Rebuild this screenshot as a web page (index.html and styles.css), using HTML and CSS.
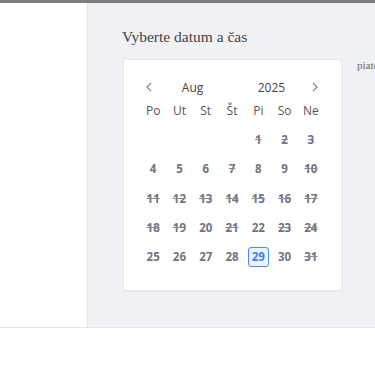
FILE: index.html
```html
<!DOCTYPE html>
<html lang="sk">
<head>
    <meta charset="UTF-8">
    <meta name="viewport" content="width=device-width, initial-scale=1.0">
    <title>Rezervácia</title>
    <link rel="stylesheet" href="styles.css">
</head>
<body>
    <div class="top-bar"></div>
    <div class="layout">
        <aside class="sidebar"></aside>
        <main class="main">
            <h2 class="title">Vyberte datum a čas</h2>
            <div class="picker-row">
                <div class="calendar">
                    <div class="cal-header">
                        <button class="arrow prev" aria-label="Predchádzajúci">
                            <svg width="6" height="10" viewBox="0 0 6 10"><path d="M5 1 1 5l4 4" fill="none" stroke="#888" stroke-width="1.2"/></svg>
                        </button>
                        <span class="month">Aug</span>
                        <span class="year">2025</span>
                        <button class="arrow next" aria-label="Ďalší">
                            <svg width="6" height="10" viewBox="0 0 6 10"><path d="M1 1l4 4-4 4" fill="none" stroke="#888" stroke-width="1.2"/></svg>
                        </button>
                    </div>
                    <div class="cal-grid">
                        <span class="dow">Po</span>
                        <span class="dow">Ut</span>
                        <span class="dow">St</span>
                        <span class="dow">Št</span>
                        <span class="dow">Pi</span>
                        <span class="dow">So</span>
                        <span class="dow">Ne</span>

                        <span></span><span></span><span></span><span></span>
                        <span class="day off">1</span>
                        <span class="day off">2</span>
                        <span class="day off">3</span>

                        <span class="day">4</span>
                        <span class="day">5</span>
                        <span class="day">6</span>
                        <span class="day off">7</span>
                        <span class="day">8</span>
                        <span class="day">9</span>
                        <span class="day off">10</span>

                        <span class="day off">11</span>
                        <span class="day off">12</span>
                        <span class="day off">13</span>
                        <span class="day off">14</span>
                        <span class="day off">15</span>
                        <span class="day off">16</span>
                        <span class="day off">17</span>

                        <span class="day off">18</span>
                        <span class="day off">19</span>
                        <span class="day">20</span>
                        <span class="day off">21</span>
                        <span class="day">22</span>
                        <span class="day off">23</span>
                        <span class="day off">24</span>

                        <span class="day">25</span>
                        <span class="day">26</span>
                        <span class="day">27</span>
                        <span class="day">28</span>
                        <span class="day selected">29</span>
                        <span class="day">30</span>
                        <span class="day off">31</span>
                    </div>
                </div>
                <p class="chosen">piatok 29. augusta 2025</p>
            </div>
        </main>
    </div>
</body>
</html>
```

FILE: styles.css
```css
body {
    margin: 0;
    font-family: "Open Sans", "Noto Sans", sans-serif;
    background-color: #fff;
    overflow: hidden;
}

.top-bar {
    height: 3px;
    background-color: #7d7d7d;
}

.layout {
    display: flex;
    height: 324px;
    border-bottom: 1px solid #e4e5e8;
}

.sidebar {
    width: 87px;
    flex-shrink: 0;
    border-right: 1px solid #e4e5e8;
    background-color: #fff;
}

.main {
    flex: 1;
    min-width: 0;
    overflow: hidden;
    background-color: #f0f1f5;
    padding: 0 0 0 34px;
}

.title {
    margin: 24px 0 0;
    font-family: "Liberation Serif", "DejaVu Serif", serif;
    font-weight: 400;
    font-size: 15.5px;
    line-height: 20px;
    color: #444;
}

.picker-row {
    display: flex;
    align-items: flex-start;
    margin-top: 12px;
}

.calendar {
    width: 184px;
    flex-shrink: 0;
    margin-left: 1px;
    padding: 18px 17px 18px 16px;
    background-color: #fff;
    border: 1px solid #e6e7eb;
    border-radius: 2px;
    box-shadow: 0 1px 1px rgba(0, 0, 0, 0.03);
}

.cal-header,
.cal-grid {
    display: grid;
    grid-template-columns: repeat(7, 1fr);
}

.cal-header {
    height: 18px;
    align-items: center;
    font-size: 12px;
    color: #444;
}

.arrow {
    display: flex;
    padding: 0;
    border: none;
    background: none;
}

.prev {
    justify-self: start;
    margin-left: 6px;
}

.next {
    grid-column: 7;
    justify-self: end;
    margin-right: 6px;
}

.month {
    grid-column: 2 / 4;
    text-align: center;
}

.year {
    grid-column: 5 / 7;
    text-align: center;
}

.cal-grid {
    grid-auto-rows: 29.3px;
    align-items: center;
    justify-items: center;
    font-size: 12px;
}

.dow {
    color: #555;
}

.day {
    font-weight: 700;
    font-size: 11.5px;
    color: #72727f;
    width: 21px;
    height: 20px;
    line-height: 20px;
    text-align: center;
}

.day.off {
    text-decoration: line-through;
    text-decoration-color: #8a8a96;
}

.day.selected {
    box-sizing: border-box;
    line-height: 18px;
    border: 1.5px solid #4a8df8;
    border-radius: 3px;
    background-color: #eaf2ff;
    color: #3d7fef;
}

.chosen {
    margin: 0 0 0 15px;
    white-space: nowrap;
    font-family: "Liberation Serif", "DejaVu Serif", serif;
    font-size: 11px;
    color: #666;
}
```
